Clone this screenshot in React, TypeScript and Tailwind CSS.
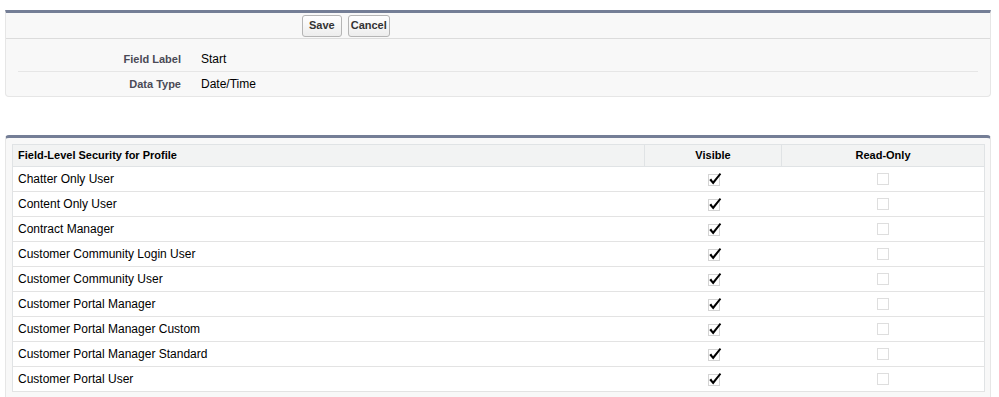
const profiles = [
  "Chatter Only User",
  "Content Only User",
  "Contract Manager",
  "Customer Community Login User",
  "Customer Community User",
  "Customer Portal Manager",
  "Customer Portal Manager Custom",
  "Customer Portal Manager Standard",
  "Customer Portal User",
];

function CheckedBox() {
  return (
    <svg width="16" height="16" viewBox="0 0 16 16" className="block">
      <rect x="1.5" y="3.5" width="11" height="11" fill="none" stroke="#a8a8a8" strokeDasharray="1 1" />
      <path d="M2.3 9 L4.2 7.5 L6 10.2 L12.8 2 L14.2 3.2 L6.2 13.6 Z" fill="#000" />
    </svg>
  );
}

function EmptyBox() {
  return (
    <svg width="16" height="16" viewBox="0 0 16 16" className="block">
      <rect x="2.5" y="2.5" width="11" height="11" fill="none" stroke="#bdbdbd" strokeDasharray="1 1" />
    </svg>
  );
}

export default function App() {
  return (
    <div className="min-h-screen bg-white text-[12px] text-black" style={{ fontFamily: '"Liberation Sans", Arial, sans-serif' }}>
      <div className="ml-[5px] w-[986px] pt-[10px]">
        {/* detail block */}
        <div className="rounded-b-[4px] border-x border-b border-t-[3px] border-x-[#e6e6e6] border-b-[#e6e6e6] border-t-[#747e96] bg-[#f8f8f8]">
          <div className="flex h-[26px] items-center gap-[6px] border-b border-[#dcdcdc] pl-[296px]">
            <button className="h-[22px] rounded-[3px] border border-[#b5b5b5] bg-gradient-to-b from-white to-[#ededed] px-[6px] text-[11px] font-bold text-[#333]">
              Save
            </button>
            <button className="h-[22px] rounded-[3px] border border-[#b5b5b5] bg-gradient-to-b from-white to-[#ededed] px-[2px] text-[11px] font-bold text-[#333]">
              Cancel
            </button>
          </div>
          <div className="mx-[12px] pt-[8px]">
            <div className="flex h-[25px] items-center border-b border-[#e6e6e6]">
              <div className="w-[163px] text-right text-[11px] font-bold text-[#4a4a56]">Field Label</div>
              <div className="pl-[20px]">Start</div>
            </div>
            <div className="flex h-[24px] items-center">
              <div className="w-[163px] text-right text-[11px] font-bold text-[#4a4a56]">Data Type</div>
              <div className="pl-[20px]">Date/Time</div>
            </div>
          </div>
        </div>

        {/* field-level security block */}
        <div className="mt-[38px] h-[300px] rounded-t-[4px] border-x border-t-[3px] border-x-[#e6e6e6] border-t-[#747e96] bg-[#f8f8f8] pl-[6px] pr-[5px] pt-[6px]">
          <table className="w-full border-collapse border border-[#e0e3e5] bg-white">
            <thead>
              <tr className="h-[22px] bg-[#f2f3f3] text-[11px] font-bold">
                <th className="border border-[#e0e3e5] px-[5px] text-left">Field-Level Security for Profile</th>
                <th className="w-[137px] border border-[#e0e3e5] text-center">Visible</th>
                <th className="w-[203px] border border-[#e0e3e5] text-center">Read-Only</th>
              </tr>
            </thead>
            <tbody>
              {profiles.map((p) => (
                <tr key={p} className="h-[25px] border-b border-[#e3e3e3]">
                  <td className="px-[5px]">{p}</td>
                  <td>
                    <div className="flex justify-center pl-[3px]">
                      <CheckedBox />
                    </div>
                  </td>
                  <td>
                    <div className="flex justify-center">
                      <EmptyBox />
                    </div>
                  </td>
                </tr>
              ))}
            </tbody>
          </table>
        </div>
      </div>
    </div>
  );
}
